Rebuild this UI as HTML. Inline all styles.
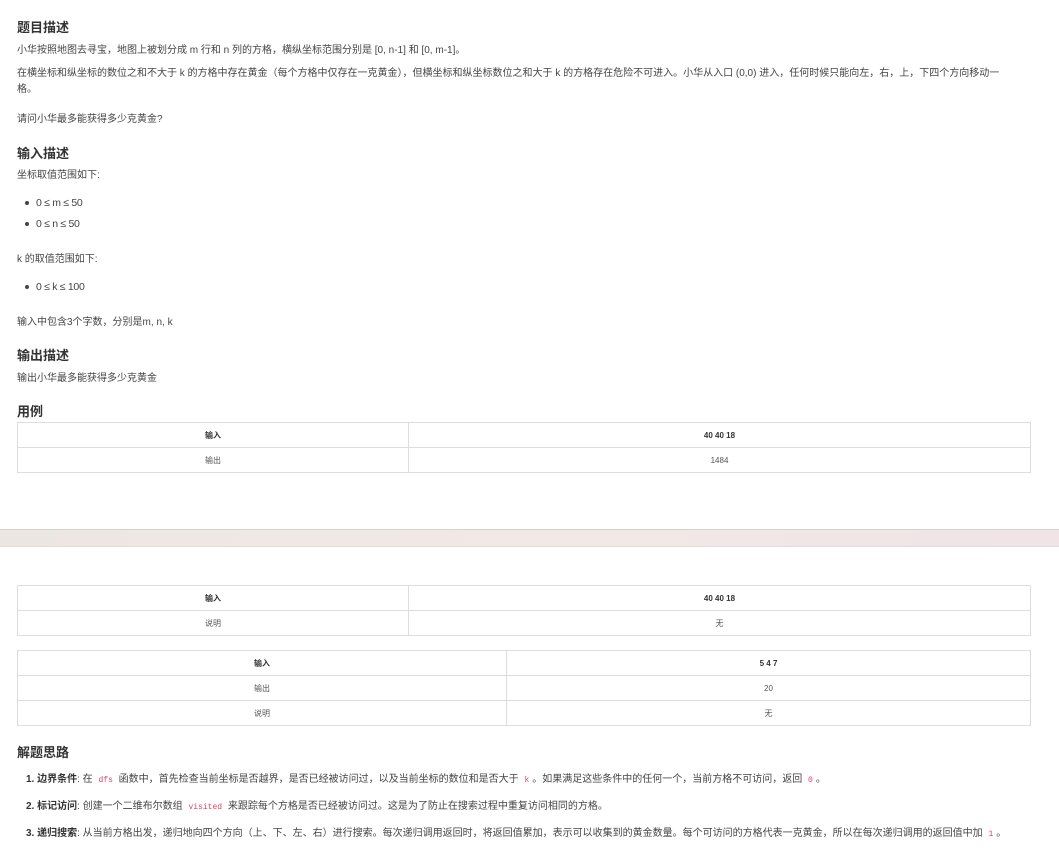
<!DOCTYPE html>
<html><head><meta charset="utf-8"><style>
*{margin:0;padding:0;box-sizing:border-box}
body{width:1059px;height:860px;background:#fff;position:relative;overflow:hidden;font-family:"Liberation Sans","Noto Sans CJK SC",sans-serif;color:#333}
.a{position:absolute;left:17px;white-space:nowrap}
h3{font-size:13px;font-weight:bold;color:#333}
.p{font-size:10px;color:#444}
.li{font-size:10.5px;color:#444;letter-spacing:-0.3px}
.li:before{content:"";position:absolute;left:-11px;top:4px;width:4px;height:4px;border-radius:50%;background:#444}
table{position:absolute;left:17px;border-collapse:collapse;font-size:8px;color:#555}
td{border:1px solid #ddd;text-align:center;height:25px}
tr:first-child td{font-weight:bold;color:#333}
code{font-family:"Liberation Mono",monospace;color:#e0436b;font-size:8px;padding:0 3px}
b{color:#333}
.band{position:absolute;left:0;top:529px;width:1059px;height:18px;background:linear-gradient(90deg,#ece6e2,#f2e9e6 50%,#f0e4e6);border-top:1px solid #d8d2ce;border-bottom:1px solid #ddd}
</style></head><body>
<h3 class="a" style="top:17px">题目描述</h3>
<div class="a p" style="top:41px">小华按照地图去寻宝，地图上被划分成 m 行和 n 列的方格，横纵坐标范围分别是 [0, n-1] 和 [0, m-1]。</div>
<div class="a p" style="top:66px;line-height:16px;white-space:normal;width:1000px">在横坐标和纵坐标的数位之和不大于 k 的方格中存在黄金（每个方格中仅存在一克黄金），但横坐标和纵坐标数位之和大于 k 的方格存在危险不可进入。小华从入口 (0,0) 进入，任何时候只能向左，右，上，下四个方向移动一格。</div>
<div class="a p" style="top:110px">请问小华最多能获得多少克黄金?</div>
<h3 class="a" style="top:143px">输入描述</h3>
<div class="a p" style="top:166px">坐标取值范围如下:</div>
<div class="a li" style="left:36px;top:197px">0 ≤ m ≤ 50</div>
<div class="a li" style="left:36px;top:218px">0 ≤ n ≤ 50</div>
<div class="a p" style="top:250px">k 的取值范围如下:</div>
<div class="a li" style="left:36px;top:281px">0 ≤ k ≤ 100</div>
<div class="a p" style="top:313px">输入中包含3个字数，分别是m, n, k</div>
<h3 class="a" style="top:345px">输出描述</h3>
<div class="a p" style="top:369px">输出小华最多能获得多少克黄金</div>
<h3 class="a" style="top:401px">用例</h3>
<table style="top:422px;width:1014px"><tr><td style="width:391px">输入</td><td>40 40 18</td></tr><tr><td>输出</td><td>1484</td></tr></table>
<div class="band"></div>
<table style="top:585px;width:1014px"><tr><td style="width:391px">输入</td><td>40 40 18</td></tr><tr><td>说明</td><td>无</td></tr></table>
<table style="top:650px;width:1014px"><tr><td style="width:489px">输入</td><td>5 4 7</td></tr><tr><td>输出</td><td>20</td></tr><tr><td>说明</td><td>无</td></tr></table>
<h3 class="a" style="top:742px">解题思路</h3>
<div class="a p" style="left:26px;top:770px"><b>1. 边界条件</b>: 在 <code>dfs</code> 函数中，首先检查当前坐标是否越界，是否已经被访问过，以及当前坐标的数位和是否大于 <code>k</code>。如果满足这些条件中的任何一个，当前方格不可访问，返回 <code>0</code>。</div>
<div class="a p" style="left:26px;top:797px"><b>2. 标记访问</b>: 创建一个二维布尔数组 <code>visited</code> 来跟踪每个方格是否已经被访问过。这是为了防止在搜索过程中重复访问相同的方格。</div>
<div class="a p" style="left:26px;top:824px"><b>3. 递归搜索</b>: 从当前方格出发，递归地向四个方向（上、下、左、右）进行搜索。每次递归调用返回时，将返回值累加，表示可以收集到的黄金数量。每个可访问的方格代表一克黄金，所以在每次递归调用的返回值中加 <code>1</code>。</div>
</body></html>
